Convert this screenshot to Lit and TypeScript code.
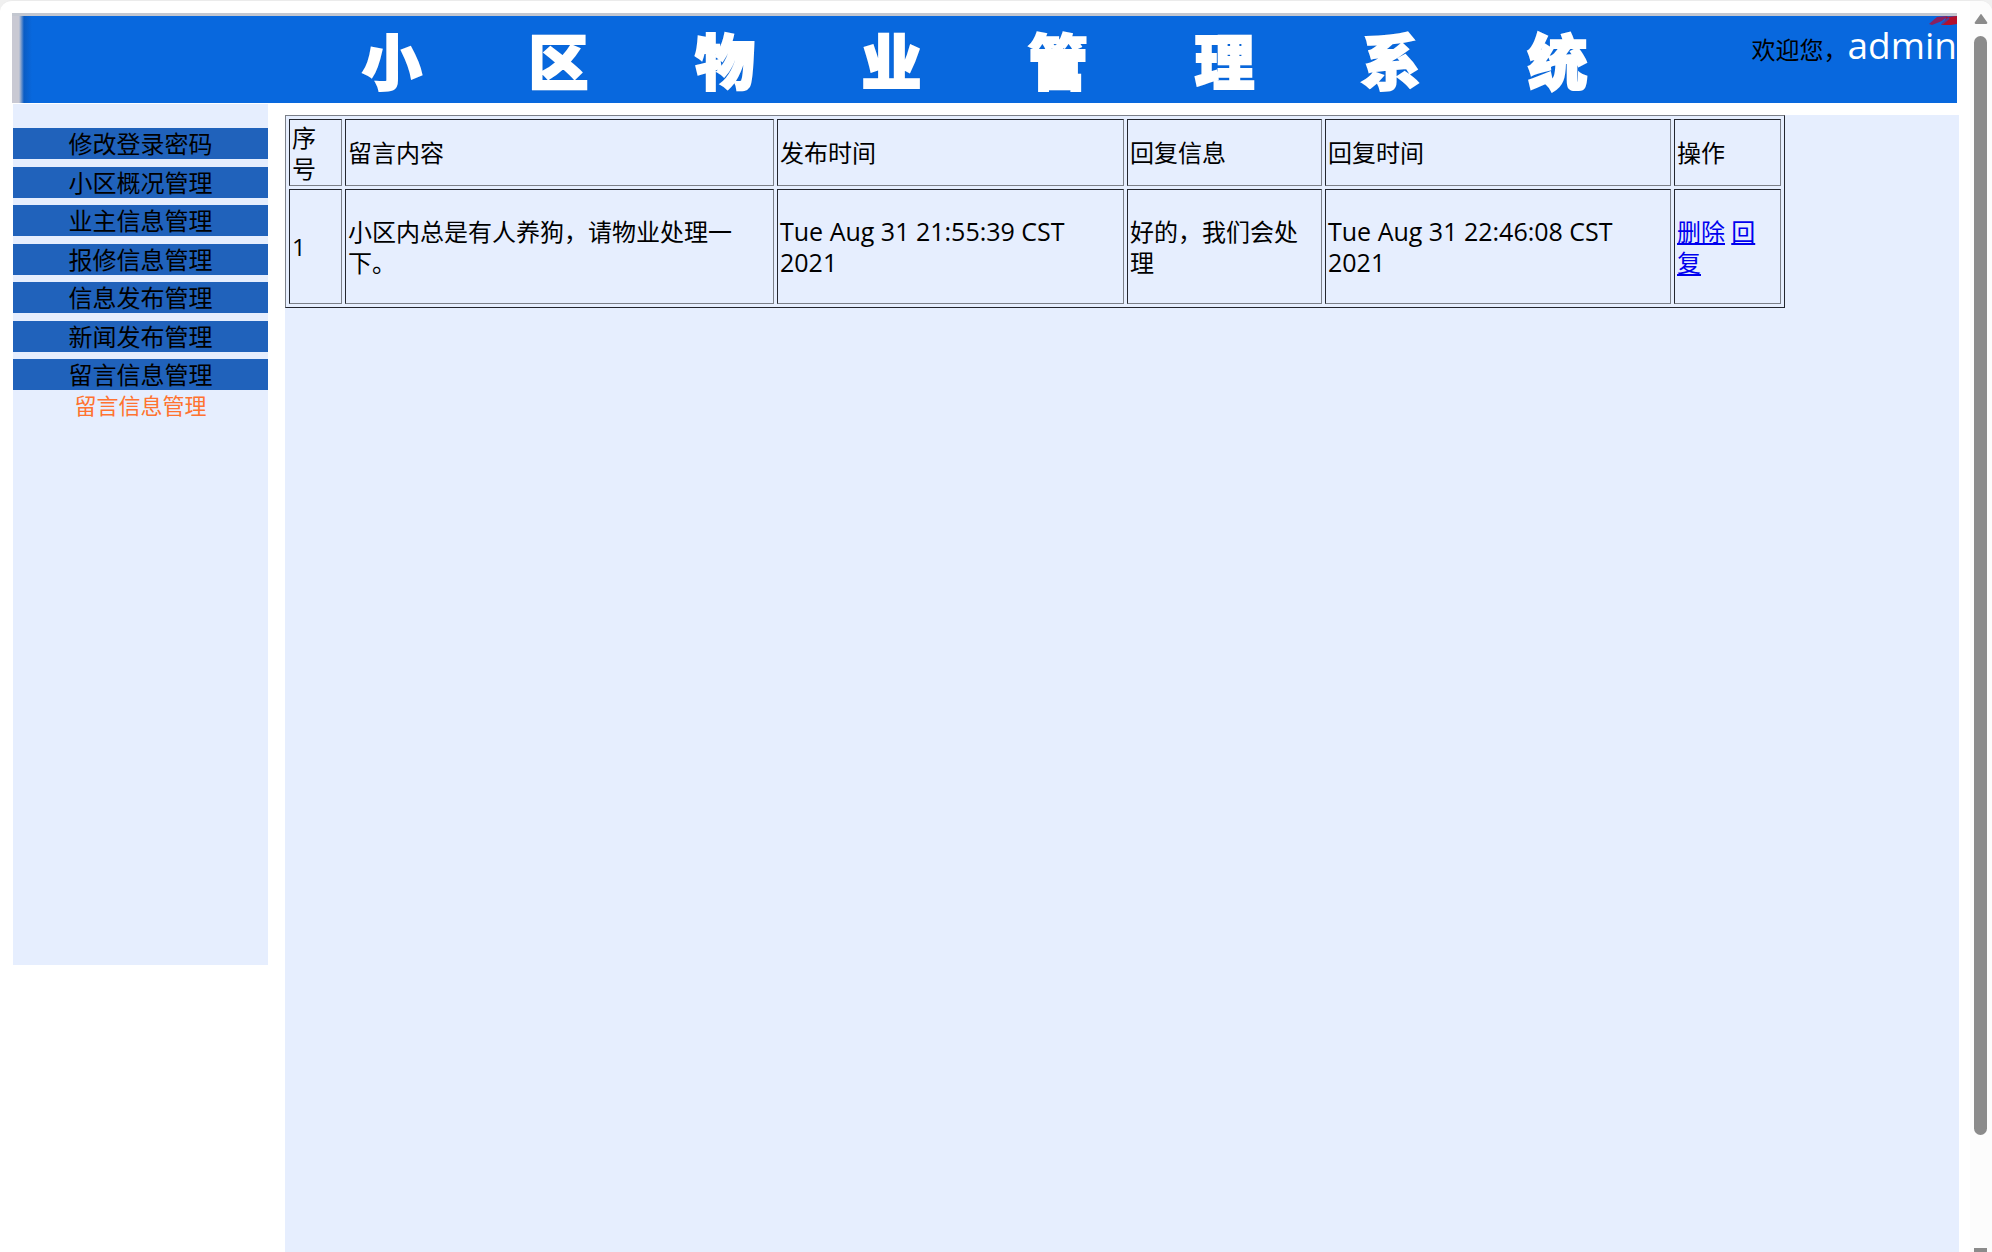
import { LitElement, html, css } from "lit";
import { customElement, state } from "lit/decorators.js";

interface Message {
  id: number;
  content: string;
  postedAt: string;
  reply: string;
  repliedAt: string;
}

@customElement("site-banner")
class SiteBanner extends LitElement {
  static styles = css`
    :host {
      display: block;
    }
    .banner {
      position: relative;
      display: flex;
      height: 90px;
      box-sizing: border-box;
      border-top: 3px solid #c3c7d0;
      background: linear-gradient(90deg, #c9c9d3 0, #c9c9d3 7px, #0a5cc4 12px, #0868de 20px, #0868de 100%);
    }
    .title {
      flex: 1;
      margin: 0 19% 0 18%;
      padding-top: 14px;
      font-size: 60px;
      line-height: 64px;
      font-weight: 900;
      color: #fff;
      text-align: justify;
      text-align-last: justify;
      white-space: nowrap;
      -webkit-text-stroke: 2px #fff;
      text-shadow: 0 0 2px #1d4f96;
    }
    .welcome {
      position: absolute;
      right: 0;
      top: 3px;
      margin: 0;
      font-size: 24px;
      line-height: 52px;
      white-space: nowrap;
      color: #000;
    }
    .user {
      font-size: 37px;
      color: #fff;
    }
    .mark {
      position: absolute;
      right: 0;
      top: 0;
      width: 28px;
      height: 10px;
    }
  `;

  render() {
    return html`
      <header class="banner">
        <h1 class="title">小区物业管理系统</h1>
        <svg class="mark" viewBox="0 0 28 10" aria-hidden="true">
          <path d="M8 1 L19 0 L13 5 L3 9 L0 8 Z" fill="#8a2060" />
          <path d="M17 1 L28 0 V8 L22 9 L12 9 L16 5 Z" fill="#b3102c" />
          <path d="M13 8 L20 2" stroke="#4a3f9a" stroke-width="2" />
        </svg>
        <p class="welcome">欢迎您，<span class="user">admin</span></p>
      </header>
    `;
  }
}

@customElement("side-menu")
class SideMenu extends LitElement {
  static styles = css`
    :host {
      display: block;
    }
    .menu {
      display: flex;
      flex-direction: column;
      justify-content: space-between;
      height: 262px;
      margin: 0;
      padding: 0;
      list-style: none;
    }
    .link {
      display: block;
      background: #2062bb;
      color: #000;
      font-size: 24px;
      line-height: 31px;
      height: 31px;
      text-align: center;
      text-decoration: none;
    }
    .sub {
      display: block;
      color: #ff7330;
      font-size: 22px;
      line-height: 31px;
      text-align: center;
      text-decoration: none;
    }
  `;

  private items = [
    "修改登录密码",
    "小区概况管理",
    "业主信息管理",
    "报修信息管理",
    "信息发布管理",
    "新闻发布管理",
    "留言信息管理",
  ];

  render() {
    return html`
      <nav>
        <ul class="menu">
          ${this.items.map((t) => html`<li><a class="link" href="#">${t}</a></li>`)}
        </ul>
        <a class="sub" href="#">留言信息管理</a>
      </nav>
    `;
  }
}

@customElement("message-table")
class MessageTable extends LitElement {
  static styles = css`
    :host {
      display: block;
    }
    .table {
      width: 100%;
      table-layout: fixed;
      border-collapse: separate;
      border-spacing: 3px;
      border: 1px solid;
      border-color: #7b7f88 #23262e #23262e #7b7f88;
      font-size: 24px;
      line-height: 31px;
    }
    .cell {
      box-sizing: border-box;
      padding: 0 2px;
      border: 1px solid;
      border-color: #23262e #7b7f88 #7b7f88 #23262e;
      font-weight: 400;
      text-align: left;
      vertical-align: middle;
    }
    .head {
      height: 67px;
    }
    .row {
      height: 115px;
    }
    .date {
      font-size: 25px;
    }
    .c-id { width: 53px; }
    .c-content { width: 429px; }
    .c-posted { width: 347px; }
    .c-reply { width: 195px; }
    .c-replied { width: 346px; }
    .c-action { width: 107px; }
    .action {
      color: #0000ee;
      text-decoration: underline;
    }
  `;

  @state() private rows: Message[] = [
    {
      id: 1,
      content: "小区内总是有人养狗，请物业处理一下。",
      postedAt: "Tue Aug 31 21:55:39 CST 2021",
      reply: "好的，我们会处理",
      repliedAt: "Tue Aug 31 22:46:08 CST 2021",
    },
  ];

  render() {
    return html`
      <table class="table">
        <colgroup>
          <col class="c-id" /><col class="c-content" /><col class="c-posted" />
          <col class="c-reply" /><col class="c-replied" /><col class="c-action" />
        </colgroup>
        <thead>
          <tr class="head">
            ${["序号", "留言内容", "发布时间", "回复信息", "回复时间", "操作"].map(
              (h) => html`<th class="cell" scope="col">${h}</th>`
            )}
          </tr>
        </thead>
        <tbody>
          ${this.rows.map(
            (r) => html`
              <tr class="row">
                <td class="cell">${r.id}</td>
                <td class="cell">${r.content}</td>
                <td class="cell date">${r.postedAt}</td>
                <td class="cell">${r.reply}</td>
                <td class="cell date">${r.repliedAt}</td>
                <td class="cell"><a class="action" href="#">删除</a> <a class="action" href="#">回复</a></td>
              </tr>
            `
          )}
        </tbody>
      </table>
    `;
  }
}

@customElement("app-root")
class AppRoot extends LitElement {
  static styles = css`
    :host {
      display: block;
      height: 100vh;
      overflow: hidden;
      background: #f0f0f0;
      color: #000;
      font-family: "Open Sans", "Noto Sans CJK SC", sans-serif;
    }
    .frame {
      display: flex;
      height: 100%;
      box-sizing: border-box;
      border-top: 1px solid #ebebeb;
      border-radius: 12px 12px 0 0;
      overflow: hidden;
      background: #fff;
    }
    .page {
      flex: 1;
      min-width: 0;
      display: flex;
      flex-direction: column;
      padding: 12px 11px 0 12px;
    }
    .banner {
      margin-right: 2px;
    }
    .columns {
      flex: 1;
      display: flex;
      align-items: flex-start;
      gap: 17px;
      padding: 1px 0 0 1px;
    }
    .side {
      flex: none;
      width: 255px;
      height: 861px;
      box-sizing: border-box;
      padding-top: 24px;
      background: #e6eefe;
    }
    .main {
      flex: 1;
      min-width: 0;
      align-self: stretch;
      margin-top: 11px;
      background: #e6eefe;
    }
    .list {
      width: 89.6%;
    }
    .scroll {
      flex: none;
      width: 22px;
      display: flex;
      flex-direction: column;
      align-items: center;
      box-sizing: border-box;
      padding: 13px 1px 0 0;
      background: #fcfcfc;
    }
    .arrow {
      flex: none;
      display: block;
      width: 14px;
      height: 10px;
    }
    .track {
      flex: 1;
      width: 13px;
      margin: 12px 0 113px;
      border-radius: 7px;
      background: #8b8b8b;
    }
    .down {
      flex: none;
      width: 13px;
      height: 4px;
      background: #8b8b8b;
    }
  `;

  render() {
    return html`
      <div class="frame">
        <div class="page">
          <site-banner class="banner"></site-banner>
          <div class="columns">
            <side-menu class="side"></side-menu>
            <main class="main">
              <message-table class="list"></message-table>
            </main>
          </div>
        </div>
        <div class="scroll" aria-hidden="true">
          <svg class="arrow" viewBox="0 0 14 10">
            <path d="M6 1 Q7 -1 8 1 L13 8 Q14 10 12 10 H2 Q0 10 1 8 Z" fill="#8b8b8b" />
          </svg>
          <div class="track"></div>
          <div class="down"></div>
        </div>
      </div>
    `;
  }
}
